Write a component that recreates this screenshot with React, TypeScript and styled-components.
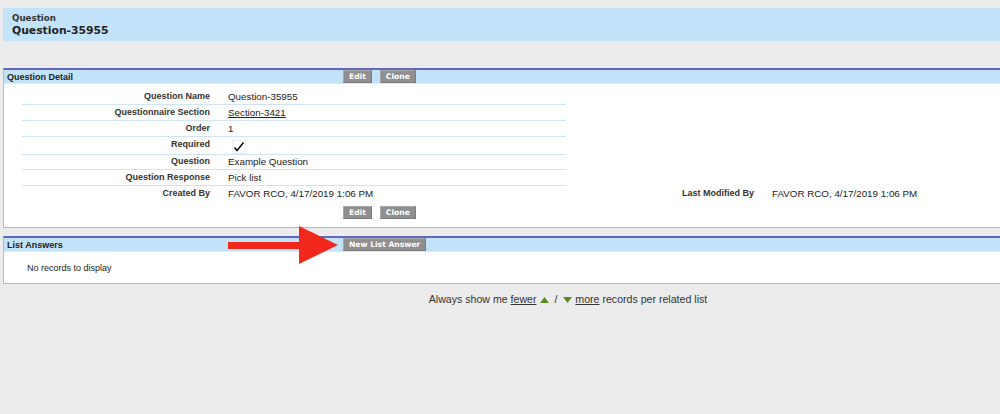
import * as React from 'react';
import styled, {createGlobalStyle} from 'styled-components';

const GlobalStyle = createGlobalStyle`
  html, body {
    margin: 0;
    padding: 0;
    background: #ececec;
    overflow: hidden;
  }
  body {
    font-family: "Liberation Sans", Arial, sans-serif;
    color: #222;
  }
`;

const Page = styled.div`
  width: 1130px;
  padding: 8px 0 0 3px;
`;

const PageHeader = styled.div`
  background: #c3e3fb;
  height: 33px;
  box-sizing: border-box;
  padding: 5px 9px 0;
  font-family: "DejaVu Sans", Verdana, sans-serif;
  font-weight: bold;
`;

const HeaderType = styled.div`
  font-size: 8.7px;
  color: #333;
  line-height: 10px;
`;

const HeaderName = styled.div`
  font-size: 10.8px;
  color: #222;
  line-height: 15px;
`;

const Panel = styled.div<{gap: number}>`
  position: relative;
  margin-top: ${(p) => p.gap}px;
  background: #fff;
  border-top: 2px solid #6268c0;
  border-left: 1px solid #b2b6dc;
  border-right: 1px solid #b2b6dc;
  border-bottom: 1px solid #b2b6dc;
`;

const PanelHeader = styled.div`
  display: flex;
  align-items: center;
  height: 14px;
  box-sizing: border-box;
  background: #c2e2f9;
  border-bottom: 1px solid #d8ecfb;
`;

const PanelTitle = styled.div`
  width: 339px;
  box-sizing: border-box;
  padding-left: 3px;
  font-size: 9px;
  font-weight: bold;
  color: #222;
`;

const ButtonGroup = styled.div<{indent?: number}>`
  display: flex;
  gap: 8px;
  padding-left: ${(p) => p.indent || 0}px;
`;

const Button = styled.button`
  height: 13px;
  padding: 0 5px;
  border: 1px solid #7c7c7c;
  border-top-color: #a8a8a8;
  border-left-color: #a8a8a8;
  background: #8f8f8f;
  color: #fff;
  font-family: "DejaVu Sans", Verdana, sans-serif;
  font-size: 7.6px;
  font-weight: bold;
  line-height: 11px;
  cursor: pointer;
`;

const DetailBody = styled.div`
  padding: 5px 0 0 18px;
`;

const DetailRow = styled.div<{h: number}>`
  display: grid;
  grid-template-columns: 194px 350px 194px 1fr;
  height: ${(p) => p.h}px;
`;

const Cell = styled.div<{line?: boolean}>`
  display: flex;
  align-items: flex-start;
  padding-top: 2px;
  box-sizing: border-box;
  border-bottom: 1px solid ${(p) => (p.line ? '#cfe5f6' : 'transparent')};
`;

const Label = styled(Cell)`
  justify-content: flex-end;
  padding-right: 6px;
  font-size: 9px;
  font-weight: bold;
  color: #333;
  line-height: 11px;
`;

const Value = styled(Cell)`
  padding-left: 12px;
  font-size: 9.8px;
  line-height: 11px;
  color: #222;
`;

const ValueLink = styled.a`
  color: #222;
  text-decoration: underline;
`;

const BottomButtons = styled(ButtonGroup)`
  margin: 5px 0 8px;
`;

const EmptyBody = styled.div`
  height: 31px;
  padding-left: 23px;
  display: flex;
  align-items: center;
  font-size: 9px;
  color: #222;
`;

const Arrow = styled.svg`
  position: absolute;
  left: 223px;
  top: -12px;
  pointer-events: none;
`;

const Footer = styled.div`
  margin-top: 9px;
  text-align: center;
  font-size: 10.6px;
  color: #333;
`;

const FooterLink = styled.a`
  color: #333;
  text-decoration: underline;
`;

const Tri = styled.svg`
  vertical-align: middle;
  margin: 0 3px;
`;

const Check = () => (
  <svg width="14" height="14" viewBox="0 0 14 14" style={{marginLeft: 4, marginTop: 1}}>
    <rect x="0.5" y="0.5" width="13" height="13" fill="none" stroke="#eee" />
    <path d="M2.5 7.5 L5 10.5 L11.5 2.5" fill="none" stroke="#111" strokeWidth="1.6" />
  </svg>
);

const rows: {label: string; value: React.ReactNode; h: number}[] = [
  {label: 'Question Name', value: 'Question-35955', h: 16},
  {label: 'Questionnaire Section', value: <ValueLink href="#">Section-3421</ValueLink>, h: 15.5},
  {label: 'Order', value: '1', h: 16},
  {label: 'Required', value: <Check />, h: 17.5},
  {label: 'Question', value: 'Example Question', h: 16},
  {label: 'Question Response', value: 'Pick list', h: 16},
];

const App = () => (
  <Page>
    <GlobalStyle />
    <PageHeader>
      <HeaderType>Question</HeaderType>
      <HeaderName>Question-35955</HeaderName>
    </PageHeader>

    <Panel gap={27}>
      <PanelHeader>
        <PanelTitle>Question Detail</PanelTitle>
        <ButtonGroup>
          <Button>Edit</Button>
          <Button>Clone</Button>
        </ButtonGroup>
      </PanelHeader>
      <DetailBody>
        {rows.map((r) => (
          <DetailRow key={r.label} h={r.h}>
            <Label line>{r.label}</Label>
            <Value line>{r.value}</Value>
            <Cell />
            <Cell />
          </DetailRow>
        ))}
        <DetailRow h={15}>
          <Label>Created By</Label>
          <Value>FAVOR RCO, 4/17/2019 1:06 PM</Value>
          <Label>Last Modified By</Label>
          <Value>FAVOR RCO, 4/17/2019 1:06 PM</Value>
        </DetailRow>
      </DetailBody>
      <BottomButtons indent={339}>
        <Button>Edit</Button>
        <Button>Clone</Button>
      </BottomButtons>
    </Panel>

    <Panel gap={8}>
      <PanelHeader>
        <PanelTitle>List Answers</PanelTitle>
        <ButtonGroup>
          <Button>New List Answer</Button>
        </ButtonGroup>
      </PanelHeader>
      <EmptyBody>No records to display</EmptyBody>
      <Arrow width="116" height="40" viewBox="0 0 116 40">
        <rect x="1" y="16" width="72" height="7" fill="#f2281c" />
        <polygon points="72,0 111,19 72,38" fill="#f2281c" />
      </Arrow>
    </Panel>

    <Footer>
      Always show me <FooterLink href="#">fewer</FooterLink>
      <Tri width="9" height="6" viewBox="0 0 9 6"><polygon points="0,6 4.5,0 9,6" fill="#5d8b22" /></Tri>
      {' / '}
      <Tri width="9" height="6" viewBox="0 0 9 6"><polygon points="0,0 9,0 4.5,6" fill="#5d8b22" /></Tri>
      <FooterLink href="#">more</FooterLink> records per related list
    </Footer>
  </Page>
);

export default App;
